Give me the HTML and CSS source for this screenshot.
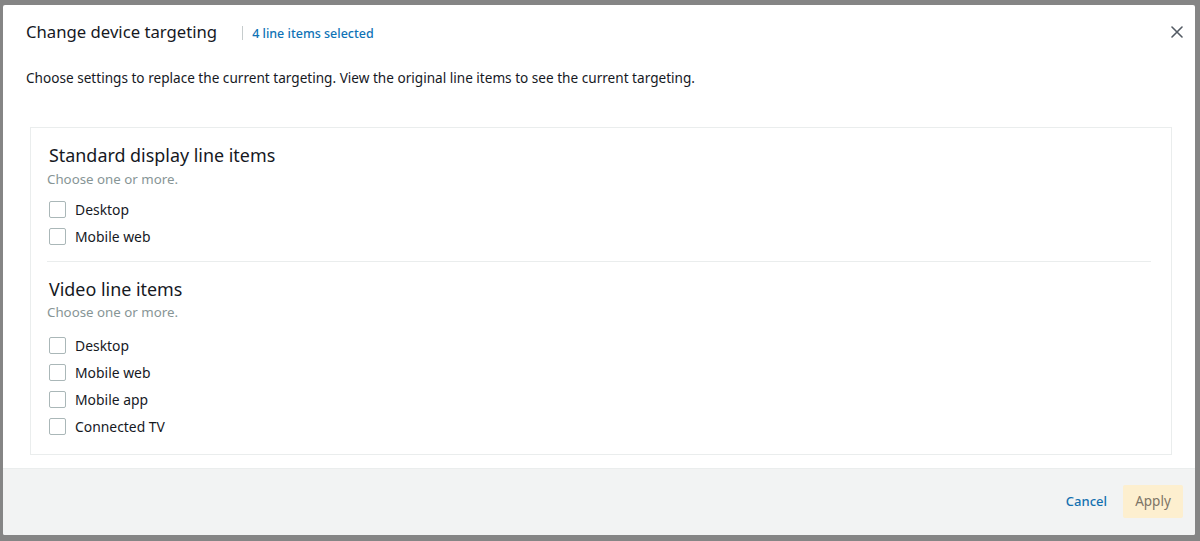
FILE: index.html
```html
<!DOCTYPE html>
<html lang="en">
<head>
<meta charset="utf-8">
<title>Change device targeting</title>
<link rel="stylesheet" href="styles.css">
</head>
<body>
<div class="modal">
  <div class="modal-main">
    <div class="header">
      <h1 class="title">Change device targeting</h1>
      <span class="sep"></span>
      <span class="count">4 line items selected</span>
      <button class="close" aria-label="Close">
        <svg width="12" height="12" viewBox="0 0 12 12"><path d="M1 1L11 11M11 1L1 11" stroke="#545b64" stroke-width="1.6" stroke-linecap="round"/></svg>
      </button>
    </div>
    <p class="desc">Choose settings to replace the current targeting. View the original line items to see the current targeting.</p>
    <div class="panel">
      <section class="group">
        <h2 class="group-title">Standard display line items</h2>
        <div class="hint">Choose one or more.</div>
        <label class="row"><span class="box"></span><span>Desktop</span></label>
        <label class="row"><span class="box"></span><span>Mobile web</span></label>
      </section>
      <div class="divider"></div>
      <section class="group">
        <h2 class="group-title">Video line items</h2>
        <div class="hint hint-2">Choose one or more.</div>
        <label class="row"><span class="box"></span><span>Desktop</span></label>
        <label class="row"><span class="box"></span><span>Mobile web</span></label>
        <label class="row"><span class="box"></span><span>Mobile app</span></label>
        <label class="row"><span class="box"></span><span>Connected TV</span></label>
      </section>
    </div>
  </div>
  <div class="footer">
    <button class="cancel">Cancel</button>
    <button class="apply">Apply</button>
  </div>
</div>
</body>
</html>
```
FILE: styles.css
```css
html, body {
  margin: 0;
  padding: 0;
  height: 100%;
}
body {
  background: #858585;
  font-family: "Noto Sans", "Open Sans", sans-serif;
  color: #16191f;
  overflow: hidden;
}
.modal {
  margin: 5px 5px 0 3px;
  height: 530px;
  background: #fff;
  border-radius: 2px;
  display: flex;
  flex-direction: column;
  overflow: hidden;
}
.modal-main {
  flex: 1;
  padding: 0 23px 0 23px;
}
.header {
  display: flex;
  align-items: center;
  height: 28px;
  margin-top: 13px;
}
.title {
  margin: 0;
  font-size: 16.7px;
  font-weight: 400;
  line-height: 28px;
}
.sep {
  width: 1px;
  height: 14px;
  background: #c6cccd;
  margin: 2px 9px 0 25px;
}
.count {
  font-size: 12.5px;
  color: #0f73b6;
  font-weight: 500;
  margin-top: 3px;
}
.close {
  margin-left: auto;
  margin-right: -13px;
  border: 0;
  background: none;
  padding: 0;
  width: 16px;
  height: 16px;
  display: flex;
  align-items: center;
  justify-content: center;
}
.desc {
  margin: 22px 0 0 0;
  font-size: 13.6px;
  line-height: 20px;
}
.panel {
  margin: 39px 0 0 4px;
  border: 1px solid #eaeded;
  padding: 15px 20px 14px 18px;
}
.group-title {
  margin: 0;
  font-size: 17.9px;
  font-weight: 400;
  line-height: 24px;
}
.hint {
  margin-top: 3px;
  margin-left: -2px;
  font-size: 13.3px;
  line-height: 18px;
  color: #879596;
}
.hint-2 {
  margin-top: 2px;
}
.hint + .row {
  margin-top: 8px;
}
.hint-2 + .row {
  margin-top: 11px;
}
.row {
  display: flex;
  align-items: center;
  height: 27px;
  font-size: 13.9px;
}
.box {
  width: 15px;
  height: 15px;
  border: 1px solid #aab7b8;
  border-radius: 2px;
  margin-right: 9px;
  background: #fff;
}
.divider {
  height: 1px;
  background: #eaeded;
  margin: 11px 0 15px -2px;
}
.footer {
  height: 67px;
  background: #f2f3f3;
  border-top: 1px solid #eaeded;
  box-sizing: border-box;
  display: flex;
  align-items: center;
  justify-content: flex-end;
  padding: 0 12px 2px 0;
}
.cancel {
  border: 0;
  background: none;
  font-family: inherit;
  font-size: 13px;
  font-weight: 500;
  color: #1470b0;
  padding: 0;
  margin-right: 16px;
}
.apply {
  border: 0;
  background: #fdefcf;
  border-radius: 2px;
  font-family: inherit;
  font-size: 13.5px;
  color: #7d7466;
  width: 60px;
  height: 33px;
  padding: 0;
}
```
